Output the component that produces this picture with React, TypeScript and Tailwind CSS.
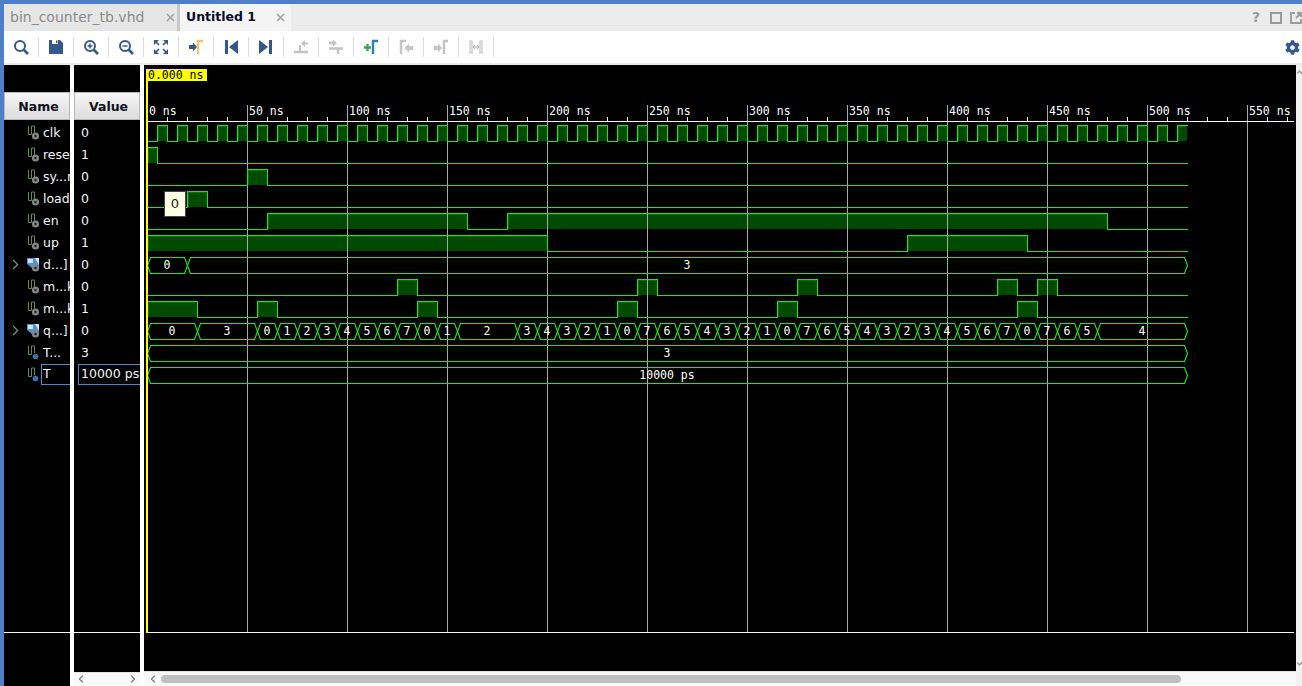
import React from "react";
import { FaCog } from "react-icons/fa";
import { ChevronLeft, ChevronRight } from "lucide-react";

const navy = "#35578f";
const dim = "#c4c4c4";

type Signal = { name: string; value: string; kind: "bit" | "bus" | "const"; expand?: boolean; selected?: boolean };

const signals: Signal[] = [
  { name: "clk", value: "0", kind: "bit" },
  { name: "reset", value: "1", kind: "bit" },
  { name: "sy...r", value: "0", kind: "bit" },
  { name: "load", value: "0", kind: "bit" },
  { name: "en", value: "0", kind: "bit" },
  { name: "up", value: "1", kind: "bit" },
  { name: "d...]", value: "0", kind: "bus", expand: true },
  { name: "m...k", value: "0", kind: "bit" },
  { name: "m...k", value: "1", kind: "bit" },
  { name: "q...]", value: "0", kind: "bus", expand: true },
  { name: "T...", value: "3", kind: "const" },
  { name: "T", value: "10000 ps", kind: "const", selected: true },
];

// page x coordinates: 0 ns sits at 147, 2 px per ns, sim ends at 1187
const END = 1187;
const clockHighs: [number, number][] = Array.from({ length: 52 }, (_, i) => [157 + i * 20, Math.min(167 + i * 20, END)]);

const digital: { row: number; highs: [number, number][] }[] = [
  { row: 0, highs: clockHighs },
  { row: 1, highs: [[147, 157]] },
  { row: 2, highs: [[247, 267]] },
  { row: 3, highs: [[187, 207]] },
  { row: 4, highs: [[267, 467], [507, 1107]] },
  { row: 5, highs: [[147, 547], [907, 1027]] },
  { row: 7, highs: [[397, 417], [637, 657], [797, 817], [997, 1017], [1037, 1057]] },
  { row: 8, highs: [[147, 197], [257, 277], [417, 437], [617, 637], [777, 797], [1017, 1037]] },
];

const qValues = "1 2 3 4 5 6 7 0 1".split(" ");
const qTail = "3 4 3 2 1 0 7 6 5 4 3 2 1 0 7 6 5 4 3 2 3 4 5 6 7 0 7 6 5".split(" ");
const qSegments: [number, number, string][] = [
  [147, 197, "0"],
  [197, 257, "3"],
  [257, 277, "0"],
  ...qValues.map((v, i): [number, number, string] => [277 + i * 20, 297 + i * 20, v]),
  [457, 517, "2"],
  ...qTail.map((v, i): [number, number, string] => [517 + i * 20, 537 + i * 20, v]),
  [1097, END, "4"],
];

const buses: { row: number; segments: [number, number, string][] }[] = [
  { row: 6, segments: [[147, 187, "0"], [187, END, "3"]] },
  { row: 9, segments: qSegments },
  { row: 10, segments: [[147, END, "3"]] },
  { row: 11, segments: [[147, END, "10000 ps"]] },
];

const monoText = "font-['DejaVu_Sans_Mono',monospace] text-[11.5px]";

function Waves() {
  const majors = Array.from({ length: 12 }, (_, i) => 147 + i * 100);
  const minors = Array.from({ length: 58 }, (_, i) => 147 + i * 20).filter((x) => (x - 147) % 100 !== 0);
  return (
    <svg width={1152} height={606} viewBox="144 65 1152 606" className="block" shapeRendering="crispEdges">
      {digital.map((d) =>
        d.highs.map(([a, b]) => (
          <g key={`${d.row}-${a}`}>
            <rect x={a} y={125 + d.row * 22} width={b - a} height={16} fill="#014a01" />
            <path d={`M${a + 1.5} ${141 + d.row * 22}V${126.5 + d.row * 22}H${b - 1}`} fill="none" stroke="#0b6a0b" />
          </g>
        ))
      )}

      {majors.slice(1).map((x) => (
        <line key={x} x1={x + 0.5} x2={x + 0.5} y1={105} y2={632} stroke="#a9a9a9" />
      ))}

      <line x1={147} x2={1294} y1={121.5} y2={121.5} stroke="#f2f2f2" />
      {minors.map((x) => (
        <line key={x} x1={x + 0.5} x2={x + 0.5} y1={117} y2={121} stroke="#f2f2f2" />
      ))}
      {majors.map((x, i) => (
        <text key={x} x={x + 2} y={115} fill="#ffffff" className={monoText} shapeRendering="auto">
          {i * 50} ns
        </text>
      ))}

      {digital.map((d) => {
        const top = 125.5 + d.row * 22;
        const low = 141.5 + d.row * 22;
        let path = `M147 ${low}`;
        d.highs.forEach(([a, b]) => {
          path += `H${a + 0.5}V${top}H${b === END ? b + 1 : b + 0.5}${b === END ? "" : `V${low}`}`;
        });
        if (d.highs[d.highs.length - 1][1] !== END) path += `H${END + 1}`;
        return <path key={d.row} d={path} fill="none" stroke="#20e420" />;
      })}

      {buses.map((bus) => {
        const top = 125.5 + bus.row * 22;
        const bottom = top + 16;
        const mid = top + 8;
        return (
          <g key={bus.row}>
            {bus.segments.map(([a, b, label]) => (
              <g key={a}>
                <path
                  d={`M${a + 0.5} ${mid}L${a + 3.5} ${top}H${b - 2.5}L${b + 0.5} ${mid}L${b - 2.5} ${bottom}H${a + 3.5}Z`}
                  fill="none"
                  stroke="#20e420"
                  strokeWidth={1.15}
                  shapeRendering="auto"
                />
                <text x={(a + b) / 2} y={mid + 3.5} textAnchor="middle" fill="#ffffff" className={monoText} shapeRendering="auto">
                  {label}
                </text>
              </g>
            ))}
          </g>
        );
      })}

      <line x1={147} x2={1294} y1={632.5} y2={632.5} stroke="#f2f2f2" />
      <rect x={146} y={69} width={2} height={564} fill="#ffff00" />
      <rect x={146} y={69} width={61} height={12} fill="#ffff00" />
      <text x={148} y={79} fill="#000000" className={monoText} shapeRendering="auto">
        0.000 ns
      </text>
    </svg>
  );
}

function Gear() {
  return (
    <g>
      <circle cx="8.500" cy="12" r="3.600" fill="#858585" />
      <circle cx="8.500" cy="12" r="1.200" fill="#1c1c1c" />
    </g>
  );
}

function SignalIcon({ kind }: { kind: Signal["kind"] }) {
  if (kind === "bus") {
    return (
      <svg width="13" height="16" viewBox="0 0 13 16" className="shrink-0">
        <path d="M0 2h12v10H5L0 8z" fill="#4f93d6" />
        <path d="M1 3h5v4H1zM8 2l4 7V2z" fill="#d6e6f5" />
        <Gear />
      </svg>
    );
  }
  return (
    <svg width="13" height="16" viewBox="0 0 13 16" className="shrink-0">
      <path d="M1.500 2V10.500H4.500V2H7.500V9" fill="none" stroke="#5d8f4e" />
      {kind === "const" ? <circle cx="8.500" cy="12.500" r="2.800" fill="#3f6fae" /> : <Gear />}
    </svg>
  );
}

function NamePanel() {
  return (
    <div className="w-[66px] shrink-0 bg-black flex flex-col">
      <div className="h-[27px] shrink-0" />
      <PanelHeader label="Name" />
      {signals.map((s, i) => (
        <div key={i} className="h-[22px] shrink-0 flex items-center text-[#f4f4f4] overflow-hidden">
          <div className="w-[23px] shrink-0 flex justify-center">
            {s.expand && <ChevronRight size={17} strokeWidth={1.5} color="#8f8f8f" />}
          </div>
          <SignalIcon kind={s.kind} />
          {s.selected ? (
            <div className="ml-px flex-1 h-[21px] border border-r-0 border-[#3f8fce] pl-px flex items-center whitespace-nowrap">{s.name}</div>
          ) : (
            <div className="ml-[3px] pt-[2px] whitespace-nowrap">{s.name}</div>
          )}
        </div>
      ))}
      <div className="h-[248px] shrink-0 border-b border-[#f2f2f2]" />
    </div>
  );
}

function PanelHeader({ label }: { label: string }) {
  return (
    <div className="h-[28px] shrink-0 mb-px border border-[#b8b8b8] bg-gradient-to-b from-[#f6f6f6] to-[#dcdcdc] flex items-center justify-center pl-[3px] pt-[2px] font-bold text-[12.5px] text-[#10101a]">
      {label}
    </div>
  );
}

function ValuePanel() {
  return (
    <div className="w-[66px] shrink-0 flex flex-col">
      <div className="flex-1 bg-black flex flex-col">
        <div className="h-[27px] shrink-0" />
        <PanelHeader label="Value" />
        {signals.map((s, i) => (
          <div key={i} className="h-[22px] shrink-0 flex items-center text-[#f4f4f4] overflow-hidden">
            {s.selected ? (
              <div className="ml-[4px] flex-1 h-[21px] border border-r-0 border-[#3f8fce] pl-[2px] flex items-center whitespace-nowrap">{s.value}</div>
            ) : (
              <div className="ml-[7px] pt-[2px] whitespace-nowrap">{s.value}</div>
            )}
          </div>
        ))}
        <div className="h-[248px] shrink-0 border-b border-[#f2f2f2]" />
      </div>
      <div className="h-[13px] shrink-0 bg-[#f8f8f8] border-t border-[#e6e6e6] mb-px flex items-center justify-between px-[1px]">
        <ChevronLeft size={12} strokeWidth={2.4} color="#777777" />
        <ChevronRight size={12} strokeWidth={2.4} color="#777777" />
      </div>
    </div>
  );
}

function WavePanel() {
  return (
    <div className="flex-1 min-w-0 flex flex-col">
      <div className="relative flex-1 bg-black overflow-hidden">
        <Waves />
        <div className="absolute left-[20px] top-[126px] w-[22px] h-[26px] bg-[#ffffe6] border border-[#444444] flex items-center justify-center text-[#222222] text-[13px]">
          0
        </div>
      </div>
      <div className="h-[14px] shrink-0 bg-[#f8f8f8] border-t border-[#e2e2e2] mb-px flex items-center">
        <div className="w-[17px] shrink-0 flex justify-center">
          <ChevronLeft size={12} strokeWidth={2.4} color="#777777" />
        </div>
        <div className="w-[1020px] h-[8px] rounded-full bg-[#bfbfbf]" />
      </div>
    </div>
  );
}

const toolbarIcons: React.ReactNode[] = [
  <g fill="none" stroke={navy} strokeWidth="2"><circle cx="7" cy="7" r="5" /><path d="M10.500 10.500l4.500 4.500" strokeWidth="2.600" /></g>,
  <path d="M1 1h3v4h6V1h2l3 3v11H1zM8 1.500h1.500v2.500H8z" fill={navy} fillRule="evenodd" />,
  <g fill="none" stroke={navy} strokeWidth="2"><circle cx="7" cy="7" r="5" /><path d="M10.500 10.500l4.500 4.500" strokeWidth="2.600" /><path d="M4.500 7h5M7 4.500v5" strokeWidth="1.500" /></g>,
  <g fill="none" stroke={navy} strokeWidth="2"><circle cx="7" cy="7" r="5" /><path d="M10.500 10.500l4.500 4.500" strokeWidth="2.600" /><path d="M4.500 7h5" strokeWidth="1.500" /></g>,
  <g fill={navy}><path d="M1 1h5L1 6zM15 1h-5l5 5zM1 15h5l-5-5zM15 15h-5l5-5z" /><path d="M3 3l3 3M13 3l-3 3M3 13l3-3M13 13l-3-3" stroke={navy} strokeWidth="1.600" /></g>,
  <g><path d="M1 6h4V3.500L9 8l-4 4.500V10H1z" fill={navy} /><path d="M10 15V2h5" fill="none" stroke="#e3c96a" strokeWidth="2.400" /></g>,
  <g fill={navy}><rect x="2" y="1" width="3" height="14" /><path d="M15 1v14L6 8z" /></g>,
  <g fill={navy}><rect x="11" y="1" width="3" height="14" /><path d="M1 1v14l9-7z" /></g>,
  <g><path d="M1 13H15M7 13V6" fill="none" stroke={dim} strokeWidth="2.400" /><path d="M15 3.500H12V1L8 4.500 12 8V5.500h3z" fill={dim} /></g>,
  <g><path d="M1 9.500H15M10 9.500V15" fill="none" stroke={dim} strokeWidth="2.400" /><path d="M1 2.500h4V.5L9 4 5 7.500V5.500H1z" fill={dim} /></g>,
  <g><path d="M1 8.500h7M4.500 5v7" stroke="#35a84a" strokeWidth="2.400" fill="none" /><path d="M10 15V2h5" fill="none" stroke="#2f7fb8" strokeWidth="2.400" /></g>,
  <g><path d="M3 15V2h5" fill="none" stroke={dim} strokeWidth="2.400" /><path d="M15 7h-4V4.500L6.500 9l4.500 4.500V11h4z" fill={dim} /></g>,
  <g><path d="M1 7h4V4.500L9 9l-4 4.500V11H1z" fill={dim} /><path d="M11 15V2h4" fill="none" stroke={dim} strokeWidth="2.400" /></g>,
  <g fill="none" stroke={dim}><path d="M2 2h2v12H2zM12 2h2v12h-2z" strokeWidth="1.200" /><path d="M5 8h6M7 6L5 8l2 2M9 6l2 2-2 2" stroke="#aaaaaa" /></g>,
];

function Toolbar() {
  return (
    <div className="h-[32px] shrink-0 bg-white flex items-center justify-between pr-[2px]">
      <div className="flex items-center">
        {toolbarIcons.map((icon, i) => (
          <React.Fragment key={i}>
            <div className="w-[34px] flex justify-center">
              <svg width="16" height="16" viewBox="0 0 16 16">{icon}</svg>
            </div>
            <div className="w-px h-[20px] bg-[#dcdcdc]" />
          </React.Fragment>
        ))}
      </div>
      <FaCog size={15} color={navy} />
    </div>
  );
}

function CloseX({ color }: { color: string }) {
  return (
    <svg width="9" height="9" viewBox="0 0 9 9" className="shrink-0">
      <path d="M1 1l7 7M8 1L1 8" stroke={color} strokeWidth="1.500" />
    </svg>
  );
}

function TabBar() {
  return (
    <div className="h-[27px] shrink-0 bg-[#ececec] flex items-stretch">
      <div className="w-[173px] bg-[#e6e6e6] flex items-center justify-between pl-[6px] pr-[2px] pb-px text-[14px] text-[#8c8c8c]">
        <span>bin_counter_tb.vhd</span>
        <CloseX color="#a0a0a0" />
      </div>
      <div className="w-[3px] bg-[#c9c9c9]" />
      <div className="w-[111px] bg-[#f4f4f4] flex items-center justify-between pl-[6px] pr-[6px] pb-px text-[12.5px] font-bold text-[#0c0c28]">
        <span>Untitled 1</span>
        <CloseX color="#a0a0a0" />
      </div>
      <div className="flex-1 flex items-center justify-end gap-[8px]">
        <span className="font-bold text-[#9a9a9a] text-[14px] w-[12px] text-center">?</span>
        <svg width="12" height="12" viewBox="0 0 12 12"><rect x="1" y="1" width="10" height="10" fill="none" stroke="#9a9a9a" strokeWidth="2" /></svg>
        <svg width="12" height="12" viewBox="0 0 12 12"><path d="M5 1H1v10h10V7M7 1h4v4M11 1L6 6" fill="none" stroke="#9a9a9a" strokeWidth="1.800" /></svg>
      </div>
    </div>
  );
}

function SideGutter() {
  return (
    <div className="w-[6px] shrink-0 -ml-[4px] bg-[#f0f0f0] flex flex-col justify-between items-end pt-[5px] pb-[20px]">
      <svg width="5" height="4" viewBox="0 0 5 4"><path d="M0 3.500L2.500 1 5 3.500" fill="none" stroke="#8a8a8a" strokeWidth="1.200" /></svg>
      <svg width="5" height="4" viewBox="0 0 5 4"><path d="M0 .5L2.500 3 5 .5" fill="none" stroke="#8a8a8a" strokeWidth="1.200" /></svg>
    </div>
  );
}

export default function App() {
  return (
    <div className="h-[686px] overflow-hidden bg-white border-t-4 border-l-4 border-[#4d7fca] flex flex-col font-['DejaVu_Sans',sans-serif] text-[12.5px]">
      <TabBar />
      <Toolbar />
      <div className="h-[2px] shrink-0 bg-[#ebebeb]" />
      <div className="flex-1 min-h-0 flex gap-[4px]">
        <NamePanel />
        <ValuePanel />
        <WavePanel />
        <SideGutter />
      </div>
    </div>
  );
}
